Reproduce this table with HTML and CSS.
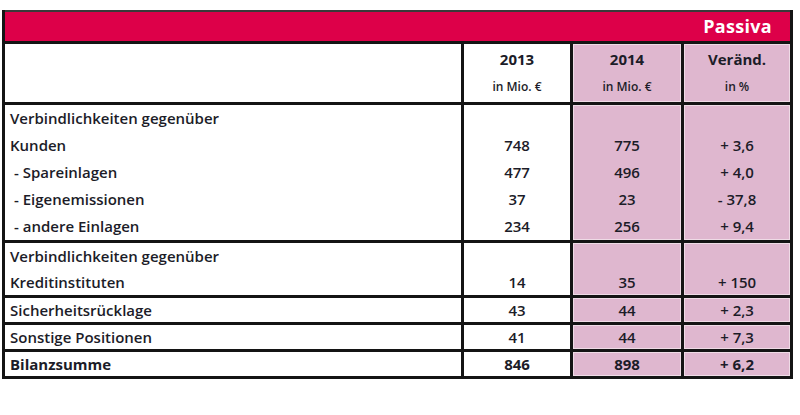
FILE: index.html
```html
<!DOCTYPE html>
<html lang="de">
<head>
<meta charset="utf-8">
<title>Passiva</title>
<link rel="stylesheet" href="styles.css">
</head>
<body>
<table class="bilanz">
  <colgroup>
    <col class="c-label">
    <col class="c-num">
    <col class="c-num2">
    <col class="c-num">
  </colgroup>
  <tr class="title-row">
    <td colspan="4" class="title">Passiva</td>
  </tr>
  <tr class="head-row">
    <td class="label"></td>
    <td class="num"><div class="h1">2013</div><div class="h2">in Mio. €</div></td>
    <td class="num pink"><div class="h1">2014</div><div class="h2">in Mio. €</div></td>
    <td class="num pink"><div class="h1">Veränd.</div><div class="h2">in %</div></td>
  </tr>
  <tr class="group">
    <td class="label">
      <div class="line">Verbindlichkeiten gegenüber</div>
      <div class="line">Kunden</div>
      <div class="line sub">- Spareinlagen</div>
      <div class="line sub">- Eigenemissionen</div>
      <div class="line sub">- andere Einlagen</div>
    </td>
    <td class="num">
      <div class="line"></div>
      <div class="line">748</div>
      <div class="line">477</div>
      <div class="line">37</div>
      <div class="line">234</div>
    </td>
    <td class="num pink">
      <div class="line"></div>
      <div class="line">775</div>
      <div class="line">496</div>
      <div class="line">23</div>
      <div class="line">256</div>
    </td>
    <td class="num pink">
      <div class="line"></div>
      <div class="line">+ 3,6</div>
      <div class="line">+ 4,0</div>
      <div class="line">- 37,8</div>
      <div class="line">+ 9,4</div>
    </td>
  </tr>
  <tr class="group">
    <td class="label">
      <div class="line2">Verbindlichkeiten gegenüber</div>
      <div class="line2">Kreditinstituten</div>
    </td>
    <td class="num"><div class="line2"></div><div class="line2">14</div></td>
    <td class="num pink"><div class="line2"></div><div class="line2">35</div></td>
    <td class="num pink"><div class="line2"></div><div class="line2">+ 150</div></td>
  </tr>
  <tr class="single">
    <td class="label"><div class="one">Sicherheitsrücklage</div></td>
    <td class="num"><div class="one">43</div></td>
    <td class="num pink"><div class="one">44</div></td>
    <td class="num pink"><div class="one">+ 2,3</div></td>
  </tr>
  <tr class="single">
    <td class="label"><div class="one">Sonstige Positionen</div></td>
    <td class="num"><div class="one">41</div></td>
    <td class="num pink"><div class="one">44</div></td>
    <td class="num pink"><div class="one">+ 7,3</div></td>
  </tr>
  <tr class="single total">
    <td class="label"><div class="one">Bilanzsumme</div></td>
    <td class="num"><div class="one">846</div></td>
    <td class="num pink"><div class="one">898</div></td>
    <td class="num pink"><div class="one">+ 6,2</div></td>
  </tr>
</table>
</body>
</html>
```

FILE: styles.css
```css
html, body {
  margin: 0;
  padding: 0;
  background: #ffffff;
}

body {
  font-family: "Open Sans", "Noto Sans", sans-serif;
  color: #1c1c28;
  font-size: 15px;
  font-weight: 600;
}

.bilanz {
  margin: 10px 0 0 2px;
  border-collapse: collapse;
  table-layout: fixed;
  width: 791px;
}

.c-label { width: 459px; }
.c-num { width: 109px; }
.c-num2 { width: 111px; }

.bilanz td {
  border: 3px solid #141414;
  padding: 0;
  vertical-align: top;
}

.title-row td {
  border-top: 2px solid #3a3a3a;
}

.title {
  background: #dd0049;
  color: #ffffff;
  font-weight: 700;
  font-size: 18px;
  text-align: right;
  padding-right: 18px !important;
  height: 29px;
  line-height: 29px;
  letter-spacing: 0.3px;
}

.label {
  padding-left: 5px !important;
  text-align: left;
}

.num {
  text-align: center;
}

.pink {
  background: #dfb7cf;
  box-shadow: inset 0 0 0 1px #efdbe6;
}

.h1 {
  height: 30px;
  line-height: 30px;
  font-weight: 700;
  font-size: 15px;
}

.h2 {
  height: 28px;
  line-height: 26px;
  font-size: 12px;
  font-weight: 600;
}

.line {
  height: 27px;
  line-height: 27px;
}

.line2 {
  height: 26px;
  line-height: 26px;
}

.one {
  height: 24px;
  line-height: 24px;
}

.sub {
  padding-left: 4px;
}

.total {
  font-weight: 700;
}
```
